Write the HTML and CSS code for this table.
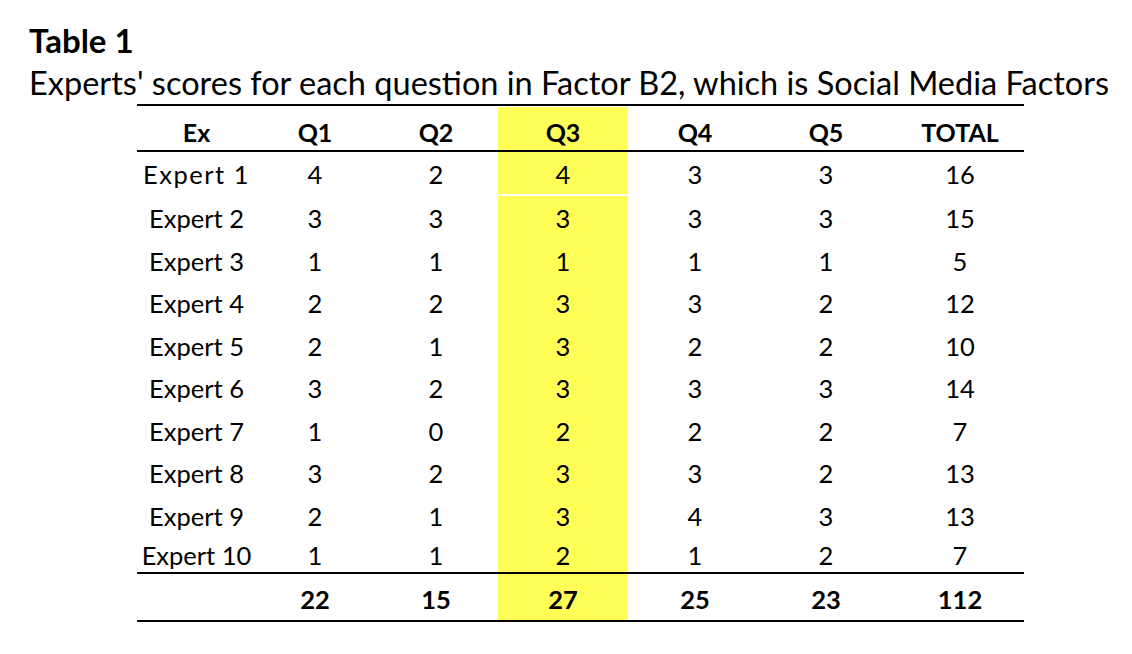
FILE: index.html
```html
<!DOCTYPE html>
<html>
<head>
<meta charset="utf-8">
<link rel="stylesheet" href="styles.css">
</head>
<body>
<div class="page">
  <div class="title">Table 1</div>
  <div class="subtitle">Experts' scores for each question in Factor B2, which is Social Media Factors</div>
  <table class="scores">
    <colgroup>
      <col class="c-ex"><col class="c-q1"><col class="c-q2"><col class="c-q3"><col class="c-q4"><col class="c-q5"><col class="c-tot">
    </colgroup>
    <thead>
      <tr><th>Ex</th><th>Q1</th><th>Q2</th><th class="hl">Q3</th><th>Q4</th><th>Q5</th><th class="tot">TOTAL</th></tr>
    </thead>
    <tbody>
      <tr class="first"><td class="wide">Expert 1</td><td>4</td><td>2</td><td class="hl">4</td><td>3</td><td>3</td><td class="tot">16</td></tr>
      <tr><td>Expert 2</td><td>3</td><td>3</td><td class="hl">3</td><td>3</td><td>3</td><td class="tot">15</td></tr>
      <tr><td>Expert 3</td><td>1</td><td>1</td><td class="hl">1</td><td>1</td><td>1</td><td class="tot">5</td></tr>
      <tr><td>Expert 4</td><td>2</td><td>2</td><td class="hl">3</td><td>3</td><td>2</td><td class="tot">12</td></tr>
      <tr><td>Expert 5</td><td>2</td><td>1</td><td class="hl">3</td><td>2</td><td>2</td><td class="tot">10</td></tr>
      <tr><td>Expert 6</td><td>3</td><td>2</td><td class="hl">3</td><td>3</td><td>3</td><td class="tot">14</td></tr>
      <tr><td>Expert 7</td><td>1</td><td>0</td><td class="hl">2</td><td>2</td><td>2</td><td class="tot">7</td></tr>
      <tr><td>Expert 8</td><td>3</td><td>2</td><td class="hl">3</td><td>3</td><td>2</td><td class="tot">13</td></tr>
      <tr><td>Expert 9</td><td>2</td><td>1</td><td class="hl">3</td><td>4</td><td>3</td><td class="tot">13</td></tr>
      <tr class="last"><td>Expert 10</td><td>1</td><td>1</td><td class="hl">2</td><td>1</td><td>2</td><td class="tot">7</td></tr>
    </tbody>
    <tfoot>
      <tr><td></td><td>22</td><td>15</td><td class="hl">27</td><td>25</td><td>23</td><td class="tot">112</td></tr>
    </tfoot>
  </table>
</div>
</body>
</html>
```

FILE: styles.css
```css
* { box-sizing: border-box; }
html, body { margin: 0; padding: 0; background: #fff; }
body {
  font-family: Lato, "Open Sans", "Liberation Sans", sans-serif;
  color: #000;
}
.page {
  padding: 21px 0 0 29px;
}
.title {
  font-size: 33px;
  font-weight: 700;
  line-height: 38px;
}
.subtitle {
  font-size: 32.5px;
  line-height: 38px;
  margin-top: 5px;
  white-space: nowrap;
}
.scores {
  margin-top: 2px;
  margin-left: 108px;
  width: 887px;
  table-layout: fixed;
  border-collapse: separate;
  border-spacing: 0;
  border-top: 2px solid #000;
  border-bottom: 2px solid #000;
  font-size: 25.5px;
}
.c-ex { width: 119px; }
.c-q1 { width: 118px; }
.c-q2 { width: 124px; }
.c-q3 { width: 130px; }
.c-q4 { width: 134px; }
.c-q5 { width: 128px; }
.c-tot { width: 134px; }
.scores th, .scores td {
  padding: 0;
  text-align: center;
  white-space: nowrap;
  line-height: 30px;
}
.scores th {
  font-weight: 700;
  font-size: 25px;
  height: 46px;
  border-top: 1px solid #fff;
  border-bottom: 2px solid #000;
  vertical-align: bottom;
  padding-bottom: 3px;
}
.scores tbody td {
  height: 42.5px;
  vertical-align: middle;
  padding-top: 2px;
}
.scores tbody tr.first td {
  height: 44px;
  border-bottom: 2px solid #fff;
}
.scores tbody tr.last td {
  height: 38px;
  border-bottom: 2px solid #000;
}
.scores tfoot td {
  height: 46px;
  font-weight: 700;
  vertical-align: middle;
  padding-top: 4px;
}
.scores .hl { background: #ffff57; }
.scores .tot { padding-left: 6px; }
.scores .wide { letter-spacing: 1.5px; }
```
